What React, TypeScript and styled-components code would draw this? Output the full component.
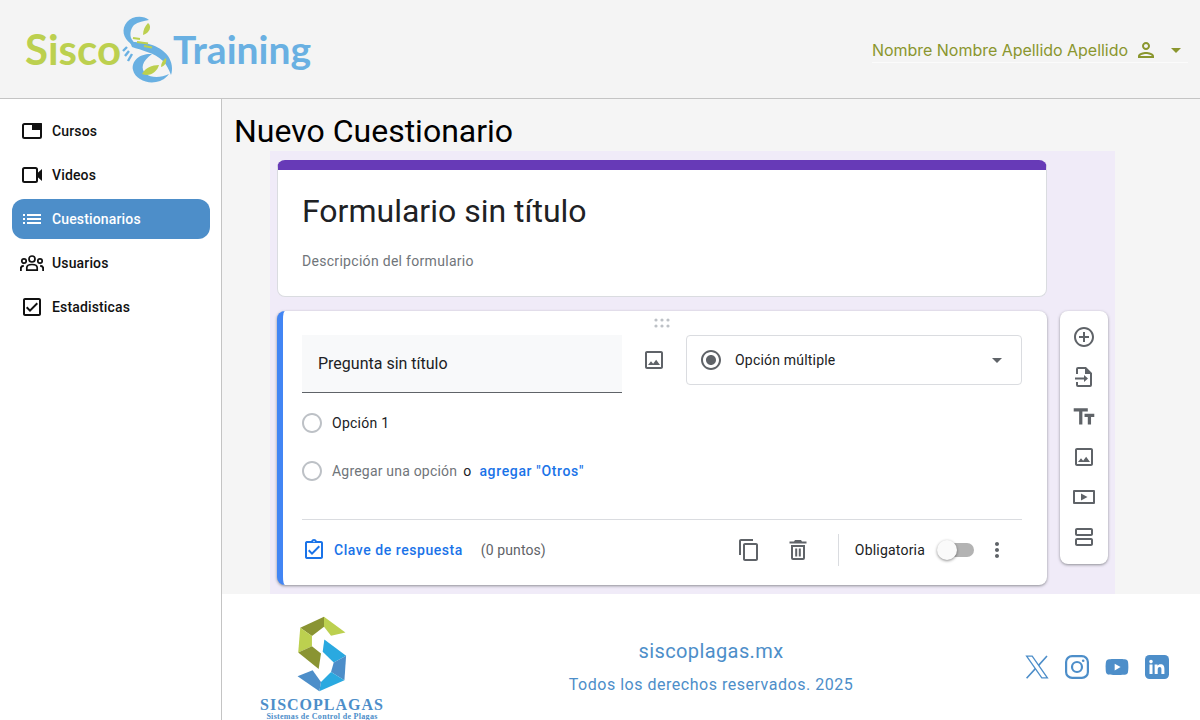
import React from 'react'
import styled, { createGlobalStyle } from 'styled-components'
import {
  MdList,
  MdOutlineCheckBox,
  MdOutlinePerson,
  MdArrowDropDown,
  MdAddCircleOutline,
  MdTextFields,
  MdOutlineImage,
  MdOutlineViewAgenda,
  MdOutlineAssignmentTurnedIn,
  MdContentCopy,
  MdMoreVert,
  MdRadioButtonChecked,
  MdRadioButtonUnchecked,
} from 'react-icons/md'
import { FaYoutube } from 'react-icons/fa6'

const GlobalStyle = createGlobalStyle`
  html, body {
    margin: 0;
    padding: 0;
    background: #f5f5f5;
    font-family: "Roboto", sans-serif;
  }
`

const Shell = styled.div`
  width: 1200px;
  height: 720px;
  overflow: hidden;
  display: grid;
  grid-template-rows: 99px 1fr;
`

const Header = styled.header`
  display: flex;
  align-items: flex-start;
  justify-content: space-between;
  background: #f4f4f4;
  border-bottom: 1px solid #c4c4c4;
  padding: 0 12px 0 25px;
`

const Logo = styled.div`
  display: flex;
  align-items: center;
  height: 98px;
  font-family: "Lato", sans-serif;
  font-weight: 700;
`

const LogoWord = styled.span<{ $color: string; $size: number }>`
  color: ${(p) => p.$color};
  font-size: ${(p) => p.$size}px;
  line-height: 50px;
`

const UserBox = styled.div`
  display: flex;
  align-items: center;
  width: 316px;
  height: 24px;
  margin-top: 38px;
  border-bottom: 1px solid #fbfbfb;
  color: #8a962e;
  font-family: "Inter", sans-serif;
  font-size: 16px;
  letter-spacing: -0.03px;
  svg { flex: none; }
`

const UserName = styled.span`
  margin-right: 6px;
  white-space: nowrap;
`

const Body = styled.div`
  display: grid;
  grid-template-columns: 222px 1fr;
  min-height: 0;
`

const Sidebar = styled.nav`
  background: #fff;
  border-right: 1px solid #c4c4c4;
  padding: 12px 11px 0 12px;
  display: flex;
  flex-direction: column;
  gap: 4px;
`

const NavItem = styled.div<{ $active?: boolean }>`
  display: flex;
  align-items: center;
  height: 40px;
  padding-left: 8px;
  border-radius: 12px;
  gap: 8px;
  font-size: 14px;
  font-weight: 500;
  letter-spacing: 0.15px;
  color: ${(p) => (p.$active ? '#fff' : '#111')};
  background: ${(p) => (p.$active ? '#4d8ec9' : 'transparent')};
  svg { flex: none; }
`

const Main = styled.main`
  display: flex;
  flex-direction: column;
  min-width: 0;
`

const Title = styled.h1`
  margin: 0;
  padding: 13px 0 1px 12px;
  font-size: 32px;
  line-height: 38px;
  font-weight: 400;
  color: #000;
`

const FormPanel = styled.section`
  display: flex;
  align-items: flex-start;
  gap: 13px;
  width: 845px;
  height: 443px;
  box-sizing: border-box;
  margin-left: 48px;
  padding: 9px 7px;
  background: #f0ebf8;
`

const FormColumn = styled.div`
  display: flex;
  flex-direction: column;
  gap: 14px;
  width: 770px;
`

const Card = styled.div`
  background: #fff;
  border-radius: 8px;
  box-sizing: border-box;
`

const TitleCard = styled(Card)`
  height: 137px;
  border: 1px solid #dadce0;
  border-top: 10px solid #673ab7;
  padding: 21px 24px 0;
`

const FormTitle = styled.div`
  font-size: 32px;
  line-height: 40px;
  color: #202124;
`

const FormDesc = styled.div`
  margin-top: 20px;
  font-size: 14px;
  line-height: 20px;
  letter-spacing: 0.3px;
  color: #70757a;
`

const QuestionCard = styled(Card)`
  height: 274px;
  border-left: 6px solid #4285f4;
  padding: 0 25px 5px 19px;
  box-shadow: 0 1px 3px rgba(60, 64, 67, 0.55);
`

const DragRow = styled.div`
  display: flex;
  justify-content: center;
  align-items: center;
  height: 24px;
`

const QuestionRow = styled.div`
  display: grid;
  grid-template-columns: 320px 64px 336px;
  align-items: start;
  height: 58px;
`

const QuestionInput = styled.div`
  height: 58px;
  box-sizing: border-box;
  display: flex;
  align-items: center;
  padding-left: 16px;
  background: #f8f9fa;
  border-bottom: 1px solid #5f6368;
  font-size: 16px;
  color: #202124;
`

const ImageSlot = styled.div`
  display: flex;
  justify-content: center;
  height: 50px;
  align-items: center;
  color: #5f6368;
`

const TypeSelect = styled.div`
  display: flex;
  align-items: center;
  height: 50px;
  box-sizing: border-box;
  border: 1px solid #dadce0;
  border-radius: 4px;
  padding: 0 12px;
  font-size: 14px;
  letter-spacing: 0.2px;
  color: #202124;
  svg { color: #5f6368; flex: none; }
`

const TypeLabel = styled.span`
  margin-left: 12px;
  flex: 1;
`

const Options = styled.div`
  margin-top: 6px;
`

const OptionRow = styled.div`
  display: flex;
  align-items: center;
  height: 48px;
  font-size: 14px;
  letter-spacing: 0.25px;
  color: #202124;
  gap: 8px;
  svg { color: #bdc1c6; flex: none; margin-left: -2px; }
`

const MutedText = styled.span`
  color: #70757a;
  letter-spacing: 0.2px;
`

const OrText = styled.span`
  margin-left: -2px;
  color: #202124;
`

const LinkText = styled.span`
  color: #1a73e8;
  font-weight: 500;
  letter-spacing: 0.65px;
`

const Divider = styled.hr`
  margin: 24px 0 0;
  border: 0;
  border-top: 1px solid #dadce0;
`

const CardFooter = styled.div`
  display: flex;
  align-items: center;
  height: 60px;
  font-size: 14px;
`

const KeyLink = styled.div`
  display: flex;
  align-items: center;
  gap: 8px;
  color: #1a73e8;
  font-weight: 500;
  letter-spacing: 0.55px;
`

const Points = styled.span`
  margin-left: 18px;
  letter-spacing: 0.1px;
  color: #5f6368;
`

const CardActions = styled.div`
  margin-left: auto;
  margin-right: 13px;
  display: flex;
  align-items: center;
  color: #5f6368;
`

const ActionIcon = styled.span<{ $gap?: number }>`
  display: flex;
  margin-left: ${(p) => p.$gap ?? 0}px;
`

const VLine = styled.span`
  width: 1px;
  height: 32px;
  margin: 0 16px 0 28px;
  background: #dadce0;
`

const RequiredLabel = styled.span`
  color: #202124;
  letter-spacing: 0.2px;
`

const Toggle = styled.span`
  position: relative;
  display: block;
  width: 34px;
  height: 14px;
  margin: 0 11px 0 15px;
  border-radius: 7px;
  background: #b3b3b3;
  &::before {
    content: '';
    position: absolute;
    left: -3px;
    top: -3px;
    width: 20px;
    height: 20px;
    border-radius: 50%;
    background: #fafafa;
    box-shadow: 0 1px 3px rgba(0, 0, 0, 0.45);
  }
`

const Toolbar = styled(Card)`
  width: 48px;
  height: 253px;
  margin-top: 151px;
  padding: 6px 0 7px;
  display: flex;
  flex-direction: column;
  box-shadow: 0 1px 3px rgba(60, 64, 67, 0.55);
  color: #5f6368;
`

const ToolButton = styled.div`
  height: 40px;
  display: flex;
  align-items: center;
  justify-content: center;
`

const Footer = styled.footer`
  flex: 1;
  display: grid;
  grid-template-columns: 1fr auto 1fr;
  align-items: center;
  box-sizing: border-box;
  padding-top: 18px;
  background: #fff;
  color: #4d8ec9;
`

const Brand = styled.div`
  display: flex;
  flex-direction: column;
  align-items: center;
  width: 130px;
  margin-left: 35px;
  align-self: start;
  padding-top: 4px;
  font-family: "Liberation Serif", serif;
  font-weight: 700;
`

const BrandName = styled.div`
  margin-top: 5px;
  font-size: 16px;
  line-height: 16px;
  letter-spacing: 1px;
  white-space: nowrap;
`

const BrandTag = styled.div`
  font-size: 8px;
  line-height: 8px;
  letter-spacing: 0.3px;
  white-space: nowrap;
`

const FooterInfo = styled.div`
  text-align: center;
`

const Site = styled.div`
  font-size: 20px;
  line-height: 24px;
  letter-spacing: 0.4px;
  margin-bottom: 12px;
`

const Rights = styled.div`
  font-size: 16px;
  line-height: 20px;
  letter-spacing: 0.52px;
`

const Socials = styled.div`
  display: flex;
  justify-content: flex-end;
  gap: 16px;
  padding-right: 31px;
`

const Scorpion = () => (
  <svg width="52" height="70" viewBox="0 0 52 70" fill="#69b0e2" style={{ flex: 'none' }}>
    <path d="M28 6C22 1 11 2 6 8C0 15 2 24 10 30C13 31 14 29 12 27C8 23 9 15 13 11C17 8 23 7 28 6Z" />
    <path d="M9 28C22 28 38 30 47 42C51 48 52 55 50 61C48 56 46 51 42 47C34 39 20 36 11 33Z" />
    <path d="M31 40C20 39 10 46 12 56C14 65 26 70 35 68C41 67 45 64 48 60C40 64 30 64 25 60C19 55 21 47 31 40Z" />
    <path d="M6 33L2 37M8 37L4 42M11 40L7 47" stroke="#69b0e2" strokeWidth="2.4" fill="none" />
    <path d="M27 9C31 12 29 19 22 21C22 16 24 12 27 9Z" fill="#bcd04f" />
    <path d="M12 24L19 25M16 28L27 29.5M23 32L31 33.5" stroke="#bcd04f" strokeWidth="2" fill="none" />
    <path d="M21 60C24 54 31 51 38 51C36 58 29 63 21 60Z" fill="#bcd04f" />
    <path d="M40 53C40 49 42 46 45 44C46 48 44 52 40 53Z" fill="#bcd04f" />
  </svg>
)

const CoursesIcon = () => (
  <svg width="24" height="24" viewBox="0 0 24 24" fill="currentColor">
    <rect x="3" y="5" width="18" height="14" rx="1.5" fill="none" stroke="currentColor" strokeWidth="2" />
    <path d="M12 4h9.5a.5.5 0 0 1 .5.5V11H12z" />
  </svg>
)

const VideosIcon = () => (
  <svg width="24" height="24" viewBox="0 0 24 24" fill="currentColor">
    <rect x="3" y="5" width="14" height="14" rx="1.5" fill="none" stroke="currentColor" strokeWidth="2" />
    <path d="M17 10.5L22 6v12l-5-4.5z" />
  </svg>
)

const UsersIcon = () => (
  <svg width="24" height="24" viewBox="0 0 24 24" fill="none" stroke="currentColor" strokeWidth="1.7">
    <circle cx="12" cy="8" r="3" />
    <circle cx="4" cy="10" r="2.2" />
    <circle cx="20" cy="10" r="2.2" />
    <path d="M6.8 19.2v-2.4c0-2 2.4-3.3 5.2-3.3s5.2 1.3 5.2 3.3v2.4z" />
    <path d="M.8 20v-2.4c0-1.6 1.2-2.6 3-2.8M23.2 20v-2.4c0-1.6-1.2-2.6-3-2.8" strokeWidth="2" />
  </svg>
)

const ImportIcon = () => (
  <svg width="24" height="24" viewBox="0 0 24 24" fill="currentColor">
    <path d="M14 2H6a2 2 0 0 0-2 2v5h2V4h7v5h5v11H6v-3H4v3a2 2 0 0 0 2 2h12a2 2 0 0 0 2-2V8l-6-6z" />
    <path d="M12 10l4 3.5-4 3.5v-2.5H3v-2h9V10z" />
  </svg>
)

const VideoFrameIcon = () => (
  <svg width="24" height="24" viewBox="0 0 24 24" fill="currentColor">
    <path d="M22 5H2a1 1 0 0 0-1 1v12a1 1 0 0 0 1 1h20a1 1 0 0 0 1-1V6a1 1 0 0 0-1-1zm-1 12H3V7h18v10z" />
    <path d="M9 8.5v7l6.5-3.5L9 8.5z" />
  </svg>
)

const TrashIcon = () => (
  <svg width="24" height="24" viewBox="0 0 24 24" fill="currentColor">
    <path d="M9 2h6l1 1.5h4.5v2h-17v-2H8L9 2z" />
    <path d="M5 7h14v13a2 2 0 0 1-2 2H7a2 2 0 0 1-2-2V7zm2 2v11h10V9H7z" />
    <path d="M9.2 10.5h2v8h-2zM12.8 10.5h2v8h-2z" />
  </svg>
)

const DragDots = () => (
  <svg width="16" height="10" viewBox="0 0 16 10" fill="#bdc1c6">
    {[2, 8, 14].map((x) =>
      [2, 8].map((y) => <circle key={`${x}-${y}`} cx={x} cy={y} r="1.6" />),
    )}
  </svg>
)

const BrandMark = () => (
  <svg width="52" height="76" viewBox="175 48 146 227">
    <path d="M183 83 254 50 254 80 218 108Z" fill="#8a9432" />
    <path d="M254 50 318 97 275 107 254 80Z" fill="#bcd04f" />
    <path d="M183 83 218 108 218 138 177 157Z" fill="#bcd04f" />
    <path d="M177 157 218 138 245 160 238 206Z" fill="#8a9432" />
    <path d="M255 118 320 167 283 187 250 155Z" fill="#2aa9e0" />
    <path d="M320 167 315 240 275 215 283 187Z" fill="#4d8ec9" />
    <path d="M315 240 240 273 245 245 275 215Z" fill="#2aa9e0" />
    <path d="M175 228 220 210 245 245 240 273Z" fill="#4d8ec9" />
  </svg>
)

const XIcon = () => (
  <svg width="24" height="24" viewBox="0 0 24 24" fill="none" stroke="currentColor" strokeWidth="1.3">
    <path d="M1.6 1.2h5.6l15.2 21.6h-5.6z" />
    <path d="M22 1L13.6 10.4M10.4 13.6L1.6 23.2" strokeWidth="1.6" />
  </svg>
)

const InstagramIcon = () => (
  <svg width="24" height="24" viewBox="0 0 24 24" fill="none" stroke="currentColor" strokeWidth="2.2">
    <rect x="1.1" y="1.1" width="21.8" height="21.8" rx="6" />
    <circle cx="12" cy="12" r="5" />
    <circle cx="18.2" cy="5.8" r="1.3" fill="currentColor" stroke="none" />
  </svg>
)

const LinkedinIcon = () => (
  <svg width="24" height="24" viewBox="0 0 24 24">
    <rect width="24" height="24" rx="4.5" fill="currentColor" />
    <path d="M4.5 9.5h3V19h-3zM6 4.8a1.8 1.8 0 1 1 0 3.6 1.8 1.8 0 0 1 0-3.6zM9.6 9.5h2.9v1.3c.5-.9 1.6-1.6 3-1.6 3 0 3.9 1.9 3.9 4.6V19h-3v-4.6c0-1.3-.3-2.5-1.7-2.5s-2 1.1-2 2.5V19h-3z" fill="#fff" />
  </svg>
)

export default function App() {
  return (
    <>
      <GlobalStyle />
      <Shell>
        <Header>
          <Logo>
            <LogoWord $color="#bcd04f" $size={42}>Sisco</LogoWord>
            <Scorpion />
            <LogoWord $color="#69b0e2" $size={39}>Training</LogoWord>
          </Logo>
          <UserBox>
            <UserName>Nombre Nombre Apellido Apellido</UserName>
            <MdOutlinePerson size={24} />
            <ActionIcon $gap={6}>
              <MdArrowDropDown size={24} />
            </ActionIcon>
          </UserBox>
        </Header>
        <Body>
          <Sidebar>
            <NavItem>
              <CoursesIcon />
              <span>Cursos</span>
            </NavItem>
            <NavItem>
              <VideosIcon />
              <span>Videos</span>
            </NavItem>
            <NavItem $active>
              <MdList size={24} />
              <span>Cuestionarios</span>
            </NavItem>
            <NavItem>
              <UsersIcon />
              <span>Usuarios</span>
            </NavItem>
            <NavItem>
              <MdOutlineCheckBox size={24} />
              <span>Estadisticas</span>
            </NavItem>
          </Sidebar>
          <Main>
            <Title>Nuevo Cuestionario</Title>
            <FormPanel>
              <FormColumn>
                <TitleCard>
                  <FormTitle>Formulario sin título</FormTitle>
                  <FormDesc>Descripción del formulario</FormDesc>
                </TitleCard>
                <QuestionCard>
                  <DragRow>
                    <DragDots />
                  </DragRow>
                  <QuestionRow>
                    <QuestionInput>Pregunta sin título</QuestionInput>
                    <ImageSlot>
                      <MdOutlineImage size={24} />
                    </ImageSlot>
                    <TypeSelect>
                      <MdRadioButtonChecked size={24} />
                      <TypeLabel>Opción múltiple</TypeLabel>
                      <MdArrowDropDown size={24} />
                    </TypeSelect>
                  </QuestionRow>
                  <Options>
                    <OptionRow>
                      <MdRadioButtonUnchecked size={24} />
                      <span>Opción 1</span>
                    </OptionRow>
                    <OptionRow>
                      <MdRadioButtonUnchecked size={24} />
                      <MutedText>Agregar una opción</MutedText>
                      <OrText>o</OrText>
                      <LinkText>agregar "Otros"</LinkText>
                    </OptionRow>
                  </Options>
                  <Divider />
                  <CardFooter>
                    <KeyLink>
                      <MdOutlineAssignmentTurnedIn size={24} />
                      <span>Clave de respuesta</span>
                    </KeyLink>
                    <Points>(0 puntos)</Points>
                    <CardActions>
                      <MdContentCopy size={24} />
                      <ActionIcon $gap={25}>
                        <TrashIcon />
                      </ActionIcon>
                      <VLine />
                      <RequiredLabel>Obligatoria</RequiredLabel>
                      <Toggle />
                      <MdMoreVert size={24} />
                    </CardActions>
                  </CardFooter>
                </QuestionCard>
              </FormColumn>
              <Toolbar>
                <ToolButton><MdAddCircleOutline size={24} /></ToolButton>
                <ToolButton><ImportIcon /></ToolButton>
                <ToolButton><MdTextFields size={26} /></ToolButton>
                <ToolButton><MdOutlineImage size={24} /></ToolButton>
                <ToolButton><VideoFrameIcon /></ToolButton>
                <ToolButton><MdOutlineViewAgenda size={24} /></ToolButton>
              </Toolbar>
            </FormPanel>
            <Footer>
              <Brand>
                <BrandMark />
                <BrandName>SISCOPLAGAS</BrandName>
                <BrandTag>Sistemas de Control de Plagas</BrandTag>
              </Brand>
              <FooterInfo>
                <Site>siscoplagas.mx</Site>
                <Rights>Todos los derechos reservados. 2025</Rights>
              </FooterInfo>
              <Socials>
                <XIcon />
                <InstagramIcon />
                <FaYoutube size={24} />
                <LinkedinIcon />
              </Socials>
            </Footer>
          </Main>
        </Body>
      </Shell>
    </>
  )
}
